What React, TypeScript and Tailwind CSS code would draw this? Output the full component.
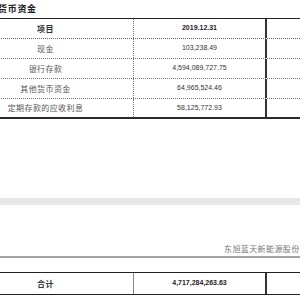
import React from "react"

const rows = [
  { name: "现金", value: "103,238.49" },
  { name: "银行存款", value: "4,594,089,727.75" },
  { name: "其他货币资金", value: "64,965,524.46" },
  { name: "定期存款的应收利息", value: "58,125,772.93" },
]

const cjk = "font-['Noto_Sans_CJK_SC',sans-serif]"
const num = "font-['Liberation_Sans','Noto_Sans_CJK_SC',sans-serif]"

function Row({ name, value, last }: { name: string; value: string; last?: boolean }) {
  return (
    <div
      className={`grid grid-cols-[176px_133px_133px] ${
        last ? "h-[20px] border-b-2 border-solid border-[#2a2a2a]" : "h-[20px] border-b border-dotted border-[#777]"
      }`}
    >
      <div className={`flex items-center justify-center border-r border-dotted border-[#777] text-[8px] tracking-[0.4px] text-[#555] ${cjk}`}>
        {name}
      </div>
      <div className={`flex items-center justify-center border-r-2 border-solid border-[#333] text-[7px] text-[#333] ${num}`}>
        {value}
      </div>
      <div />
    </div>
  )
}

export default function App() {
  return (
    <div className="w-[300px] h-[300px] overflow-hidden bg-white flex flex-col">
      {/* section title */}
      <div className={`h-[18px] pt-[4px] ml-[-2px] text-[9px] leading-[10px] font-bold tracking-[0.7px] text-[#222] ${cjk}`}>
        货币资金
      </div>

      {/* main table */}
      <div className="ml-[-42px] w-[442px] border-t border-solid border-[#222]">
        <div className="grid grid-cols-[176px_133px_133px] h-[20px] border-b border-dotted border-[#666]">
          <div className={`flex items-center justify-center border-r border-dotted border-[#777] text-[8px] font-bold tracking-[0.4px] text-[#333] ${cjk}`}>
            项目
          </div>
          <div className={`flex items-center justify-center border-r-2 border-solid border-[#333] text-[7px] font-bold text-[#222] ${num}`}>
            2019.12.31
          </div>
          <div />
        </div>
        {rows.map((r, i) => (
          <Row key={r.name} name={r.name} value={r.value} last={i === rows.length - 1} />
        ))}
      </div>

      <div className="h-[79px]" />

      {/* page gap */}
      <div className="h-[7px] bg-[#e7e7e7]" />

      {/* next page header */}
      <div className="h-[51px] flex items-end pb-[2px]">
        <div className={`pl-[224px] whitespace-nowrap text-[8px] leading-[10px] tracking-[0.4px] text-[#777] ${cjk}`}>
          东旭蓝天新能源股份有限公司
        </div>
      </div>
      <div className="h-[2px] bg-[#a3a3a3]" />

      <div className="h-[14px]" />

      {/* total table */}
      <div className="ml-[-42px] w-[442px] border-t border-b border-solid border-[#222]">
        <div className="grid grid-cols-[176px_133px_133px] h-[21px]">
          <div className={`flex items-center justify-center border-r border-solid border-[#888] text-[8px] font-bold tracking-[0.4px] text-[#333] ${cjk}`}>
            合计
          </div>
          <div className={`flex items-center justify-center border-r-2 border-solid border-[#333] text-[7px] font-bold text-[#222] ${num}`}>
            4,717,284,263.63
          </div>
          <div />
        </div>
      </div>
    </div>
  )
}
